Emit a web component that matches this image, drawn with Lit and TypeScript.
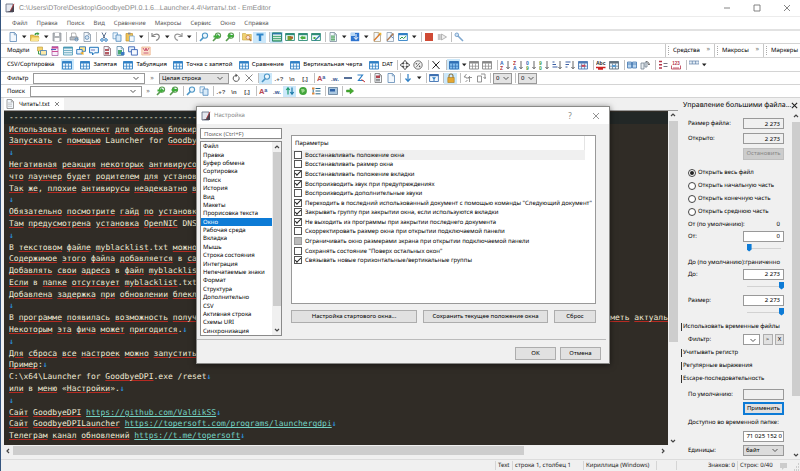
import { LitElement, html, svg, css, nothing } from "lit";
import { customElement, state } from "lit/decorators.js";
import { classMap } from "lit/directives/class-map.js";

const B = "#2f7fc4";
const mag = (c: string, x = 0) => svg`<circle cx=${6 + x} cy="3.6" r="2.6" fill="#eef7fc" stroke=${c} stroke-width="1.1"/><path d="M${4.2 + x} 5.6L${1 + x} 9" stroke=${c} stroke-width="1.6"/>`;
const page = (c: string) => svg`<path d="M2 .5h4.5L8.500 2.500V9.500H2z" fill="#f3f8fd" stroke=${c} stroke-width=".8"/><path d="M6.300 .5v2.300h2.200" fill="none" stroke=${c} stroke-width=".7"/>`;
const grid = (head: string, body = "#e9f4fc") => svg`<path d="M.5 1.500h9v7.500h-9z" fill=${body} stroke=${head} stroke-width=".9"/><path d="M.5 1.500h9v2h-9z" fill=${head}/><path d="M.5 6.200h9M3.500 3.500V9M6.500 3.500V9" stroke=${head} stroke-width=".7"/>`;
const win = (c: string) => svg`<path d="M.6 1.500h8.800v7h-8.800z" fill="#f4faff" stroke=${c} stroke-width=".9"/><path d="M.6 1.200h8.800v2h-8.800z" fill=${c}/>`;
const glyph = (t: string, c: string, s = 7) => svg`<text x="5" y="7.500" text-anchor="middle" font-size=${s} font-weight="700" fill=${c}>${t}</text>`;
const down = svg`<path d="M8 1v7.500M6.400 7L8 8.800L9.600 7" fill="none" stroke="#555" stroke-width=".9"/>`;
const sortPair = (a: string, b: string, ca: string, cb: string) => svg`<text x="0" y="4.700" font-size="5" font-weight="700" fill=${ca}>${a}</text><text x="0" y="9.500" font-size="5" font-weight="700" fill=${cb}>${b}</text>${down}`;

const ICONS: Record<string, unknown> = {
  app: svg`<path d="M1 1h7v8H1z" fill="#e4e7ee" stroke="#5a6478" stroke-width=".8"/><path d="M5 8L9 1v8H1z" fill="#4a4450"/><path d="M5.500 7.500L9 .800" stroke="#b33" stroke-width=".8"/>`,
  page: page("#5d89b5"),
  pageGrey: svg`${page("#888")}<path d="M3 4h4M3 5.700h4M3 7.400h4" stroke="#aaa" stroke-width=".6"/>`,
  open: svg`<path d="M.5 3h3l1 1h4v5h-8z" fill="#e9c34a" stroke="#b4902b" stroke-width=".6"/><path d="M2 5.500h8L8.200 9H.5z" fill="#fbe48f"/><path d="M4.500 3c0-2 1.500-2.600 3-2V0l2 1.800-2 1.800V2.400c-1-.4-1.700 0-1.700.8z" fill="#3a9c3f"/>`,
  save: svg`<path d="M1 1h8v8H1z" fill="#b2b6ba" stroke="#8d9298" stroke-width=".7"/><path d="M3 1h4v3H3zM2.600 6h4.800v3H2.600z" fill="#fff"/>`,
  print: svg`<path d="M2.500 1h4l1 4h-5z" fill="#fff" stroke="#888" stroke-width=".6"/><path d="M1 5h8v3H1z" fill="#b7bdc4" stroke="#808890" stroke-width=".6"/><circle cx="7.500" cy="7.500" r="1.500" fill="none" stroke="#4d86b8" stroke-width=".8"/>`,
  preview: svg`${page("#8795a5")}<circle cx="5" cy="5.500" r="1.900" fill="#d8e7f4" stroke="#5c88b4" stroke-width=".8"/>`,
  cut: svg`<path d="M3 .5l3 6M7 .5L4 6.500" stroke="#5d7290" stroke-width="1"/><circle cx="3" cy="8" r="1.300" fill="none" stroke=${B} stroke-width="1"/><circle cx="7" cy="8" r="1.300" fill="none" stroke=${B} stroke-width="1"/>`,
  copy: svg`<path d="M1 .8h4.500v6H1z" fill="#eaf4fc" stroke="#6c9fc9" stroke-width=".8"/><path d="M4 3h5v6.300H4z" fill="#d9ebf9" stroke="#4b87bb" stroke-width=".8"/>`,
  paste: svg`<path d="M1 1.500h6.500v7.500H1z" fill="#efc35a" stroke="#c1922f" stroke-width=".7"/><path d="M3 .6h2.500v1.800H3z" fill="#888"/><path d="M4.500 4h4.700v5.500H4.500z" fill="#f4f9fd" stroke="#6c9fc9" stroke-width=".7"/>`,
  undo: svg`<path d="M1 1v3.500h3.500M1.200 4.300C3 1.500 8 1 8.300 4.500 8.400 6.500 7 7.600 5 8.500" fill="none" stroke="#888" stroke-width="1.200"/>`,
  redo: svg`<path d="M9 1v3.500H5.500M8.800 4.300C7 1.500 2 1 1.700 4.500 1.600 6.500 3 7.600 5 8.500" fill="none" stroke="#999" stroke-width="1.200"/>`,
  find: mag("#4e97c7"),
  findNext: svg`${mag("#5a9a50")}<path d="M1.500 3.500h3.200V1.800L8.200 4.500 4.700 7V5.500H1.500z" fill="#3fae3a"/>`,
  findPrev: svg`${mag("#5a9a50")}<path d="M8.500 3H5.500V1.300L2 4l3.500 2.600V5h3z" fill="#3fae3a"/>`,
  findFiles: svg`<path d="M.5 1.500h3l1 1h4.800v5.500H.5z" fill="#f1d173" stroke="#c5a23c" stroke-width=".6"/><circle cx="6" cy="5.400" r="2" fill="#fbe4e0" stroke="#c98b50" stroke-width=".9"/><path d="M7.400 7L9.300 9" stroke="#b06e38" stroke-width="1.200"/>`,
  filter: svg`<path d="M1.500 1.500h7v2H6.200V9H3.800V3.500H1.500z" fill="#2f86c9"/>`,
  lines: svg`<path d="M.5 .8h9v8.400h-9z" fill="#fff" stroke="#1e7d66" stroke-width=".9"/><path d="M.5 1h9v1.500h-9z" fill="#2878a8"/><path d="M1 4.300h8M1 6.300h8M1 8.200h8" stroke="#2d9a5e" stroke-width="1"/>`,
  winRed: svg`${win("#2f8c77")}<path d="M2.500 4h3.500l2 2.500-2 1.800H2.500z" fill="#7a9a2e"/><path d="M5 4.500h3v2H5z" fill="#b8602c"/>`,
  winArrow: svg`${win("#2f8c77")}<path d="M7.500 4.500h-3V3.400L2 5.700 4.500 8V6.900h3z" fill="#4bae3f"/>`,
  winPen: svg`${win("#2f8c77")}<path d="M3 8.500L8.500 3l1 1L4 9z" fill="#2a78a8"/><path d="M2.500 5h2v2h-2z" fill="#4bae3f"/>`,
  docGreen: svg`${page("#7b8f9c")}<path d="M3 3.500h4v5H3z" fill="#57a86b"/><path d="M3 5h4M3 6.700h4" stroke="#fff" stroke-width=".5"/>`,
  blueDown: svg`<path d="M.8 .8h8.400v8.400H.8z" fill="#2e74cf"/><path d="M1 1h4v3H1z" fill="#b8d8f5"/><path d="M6 2v5M4 5.200L6 7.500l2-2.300" fill="none" stroke="#fff" stroke-width="1"/>`,
  wand: svg`${page("#b0a080")}<path d="M2 8.500L8 2" stroke="#d97a2a" stroke-width="1.300"/><path d="M6.500 .8h2.800v2.800z" fill="#efb52c"/>`,
  wand2: svg`${page("#8fa0b0")}<path d="M2 8.500L8.500 1.500" stroke="#b07a50" stroke-width="1.300"/><path d="M5 3.500l3.500 2.800" stroke="#5b7fb5" stroke-width=".9"/>`,
  chart: svg`${win(B)}<path d="M2 7l2-2 1.500 1.500L8.300 4" fill="none" stroke="#3a9d4b" stroke-width="1"/>`,
  stop: svg`<path d="M1 1h8v8H1z" fill="#cf4a35"/>`,
  play: svg`<path d="M.8 2h3v6h-3z" fill="#c5c5c5"/><path d="M4.500 2L9.500 5 4.500 8z" fill="#eee" stroke="#999" stroke-width=".7"/>`,
  wrench: svg`<path d="M3 3l6 6" stroke="#7ea7cf" stroke-width="1.600"/><circle cx="2.800" cy="2.800" r="1.800" fill="#cfe1f2" stroke="#6f9bc7" stroke-width=".9"/>`,
  mod1: svg`<path d="M.5 1h5v4h-5z" fill="#f3d36e" stroke="#b99531" stroke-width=".6"/><path d="M3.500 4.500h6v4.500h-6z" fill="#fbe9a8" stroke="#3c79b4" stroke-width=".8"/><path d="M1.500 5v3h2" fill="none" stroke="#3f9a4c"/>`,
  mod2: svg`<path d="M2 .5h6v9H2z" fill="#f7eefa" stroke="#a04a9a" stroke-width=".7"/><path d="M2 1h6v1.500H2zM2 5h6v1H2z" fill="#cc4b93"/><path d="M1 3.500h5" stroke="#4c63c0" stroke-width="1"/>`,
  mod3: svg`<path d="M.5 1h9v8h-9z" fill="#e2f1f7" stroke="#4a98b4" stroke-width=".8"/><path d="M.5 1h9v1.500h-9z" fill="#4a98b4"/><path d="M1 4.500h8M1 6.700h8" stroke="#5c9fb8" stroke-width=".8"/>`,
  mod4: svg`<path d="M3.500 .8h6v4.500h-6z" fill="#ffe489" stroke="#2c77bd" stroke-width=".9"/><path d="M.7 3.500h5.500v4.500H.7z" fill="#e7f3fc" stroke="#2c77bd" stroke-width=".9"/><path d="M4 7l3.500-1.500v3.500z" fill="#efae28"/>`,
  mod5: svg`<path d="M.6 1.300h8.800v5.500H5.500L3.500 9V6.800H.6z" fill="#eff8ff" stroke="#2276bb" stroke-width="1"/><path d="M2 4h4" stroke="#55a" stroke-width=".8"/>`,
  mod6: svg`${page("#8b6f78")}<path d="M3 3h4v2H3zM3 6h4v2.500H3z" fill="#b55a62"/>`,
  mod7: svg`${page("#5c8ba8")}<path d="M3 4h4v4.500H3z" fill="#4aa874"/><path d="M6 6h3.500v3H6z" fill="#3c79c2"/>`,
  mod8: svg`<path d="M.6 .8h6v5h-6z" fill="#e7f3fc" stroke="#3a63b5" stroke-width=".9"/><path d="M3.400 3.600h6v5.500h-6z" fill="#f6faff" stroke="#3a63b5" stroke-width=".9"/>`,
  mod9: svg`<path d="M.8 1h8.400v8H.8z" fill="#fbe2cf" stroke="#e7a06c" stroke-width=".6"/><path d="M2 2l2 3 1-3 1 3 2-3M2.500 7h5" fill="none" stroke="#c64c6b" stroke-width=".9"/>`,
  grid: grid(B),
  gridGrey: grid("#888", "#fff"),
  gridFill: grid("#2f6fb5", "#83bdec"),
  gridRed: svg`${grid("#4c79b5")}<path d="M3.500 4.800h4v2h-4z" fill="#c8485a"/>`,
  gridDark: svg`${grid("#62707c")}<path d="M3 5h4v2H3z" fill="#5b9bd0"/>`,
  move: svg`<path d="M5 .3L7 2.800H6.200V4h1.200v-.9L9.800 5 7.400 7V6H6.200v1.300H7L5 9.700 3 7.300h.8V6H2.600v1L.2 5l2.400-2v1h1.200V2.800H3z" fill="#fff" stroke="#222" stroke-width=".8"/>`,
  percent: svg`<circle cx="5" cy="5" r="4.200" fill="#f2f2f2" stroke="#555" stroke-width=".8"/><path d="M3 7.300l4-4.600" stroke="#555" stroke-width=".8"/><circle cx="3.400" cy="3.700" r=".8" fill="#555"/><circle cx="6.600" cy="6.400" r=".8" fill="#555"/>`,
  cross: svg`<path d="M1.500 1.500l7 7M8.500 1.500l-7 7" stroke="#777" stroke-width=".9"/>`,
  crossDark: svg`<path d="M1.500 1l7 8M8.500 1.500l-7 7" stroke="#222" stroke-width="1"/>`,
  az: sortPair("A", "Z", "#2b62b0", "#b03030"),
  za: sortPair("Z", "A", "#b03030", "#2b62b0"),
  n1: sortPair("0", "9", "#2b62b0", "#3d9a3d"),
  n2: sortPair("9", "0", "#3d9a3d", "#3d9a3d"),
  s1: svg`<path d="M.5 2h2M.5 4.500h3.500M.5 7h5" stroke="#3b5fa5" stroke-width="1.200"/>${down}`,
  s2: svg`<path d="M.5 2h5M.5 4.500h3.500M.5 7h2" stroke="#3b5fa5" stroke-width="1.200"/>${down}`,
  abc: svg`<text x="0" y="5" font-size="5" font-weight="700" fill="#222">Abc</text><path d="M0 7.500h9.500M2 9h5" stroke="#c22" stroke-width="1.300"/>`,
  join: svg`<path d="M.5 2h4v6h-4zM5.500 2h4v6h-4z" fill="#b9d6f0" stroke="#4377b0" stroke-width=".8"/><path d="M.5 4h9" stroke="#4377b0" stroke-width=".8"/>`,
  split: svg`<path d="M1 3h3v6H1zM5 2h2v5H5z" fill="#e8edf0" stroke="#718090" stroke-width=".8"/><path d="M6 1.500c2 0 3 1 3 3M7.800 3.500L9 5l1-1.500" fill="none" stroke="#555" stroke-width=".8"/>`,
  rows: svg`<path d="M1 1.500h3M1 4.700h3M1 8h3" stroke="#b5354a" stroke-width="1.600"/><path d="M5.500 3.500h4M5.500 6.500h4" stroke="#667" stroke-width=".9"/>`,
  ruler: svg`<text x="5" y="4.500" text-anchor="middle" font-size="4.500" font-weight="700" fill="#b5354a">123</text><path d="M.5 5.500V9h9V5.500M3 7v2M5 7v2M7 7v2" fill="none" stroke="#b5354a" stroke-width=".8"/>`,
  header: svg`<path d="M0 1h10v3H0z" fill="#e5eef6" stroke="#5f7fa8" stroke-width=".7"/><path d="M3.300 1v3M6.600 1v3" stroke="#5f7fa8" stroke-width=".7"/>`,
  refresh: svg`<path d="M7.500 3.500A3 3 0 1 1 4.800 2.400" fill="none" stroke="#555" stroke-width="1"/><path d="M4.500 .6L7 2.400 4.500 4.200z" fill="#555"/>`,
  regex: glyph(".+?", "#555", 6),
  nl: glyph("\\n", "#555", 6),
  brackets: glyph("[,]", "#444", 6),
  aa: svg`<text x="0" y="8" font-size="7.500" font-weight="700" fill="#b8474f">A</text><text x="5.300" y="5.800" font-size="5.500" font-weight="700" fill="#3d5e9c">a</text>`,
  word: glyph(".w.", "#33558f", 6),
  dash: svg`<path d="M1 5h8" stroke="#2d4d80" stroke-width="1.600"/>`,
  zed: svg`<path d="M1.500 2h5L2.500 7.500h5" fill="none" stroke=${B} stroke-width="1.200"/><path d="M5.500 6.500l3.500 2.500" stroke="#c33" stroke-width="1"/>`,
  bookRed: svg`${page("#777")}<path d="M3 2.500h4V5H3z" fill="#b2434e"/><path d="M3 6.300h4M3 7.800h4" stroke="#555" stroke-width=".8"/>`,
  arrowDown: svg`<path d="M5 1v7M2.500 5.500L5 8.300l2.500-2.800" fill="none" stroke=${B} stroke-width="1.200"/>`,
  winFilter: svg`${win("#3d6fb0")}<path d="M3 4.300h4L5.500 6.200V8h-1V6.200z" fill=${B}/>`,
  lock: svg`<path d="M3 5V3a2 2 0 0 1 4 0v2" fill="none" stroke="#8d7740" stroke-width="1.100"/><path d="M1.800 4.500h6.400v5H1.800z" fill="#e5a833" stroke="#a87920" stroke-width=".6"/>`,
  fold: svg`<path d="M3.500 1L1 4h2v1h3V4M5 4.500h4M6.500 3v6M4.500 7l-2 2" fill="none" stroke="#888" stroke-width=".9"/>`,
  unfold: svg`<path d="M1.500 3h4v6h-4zM5 1h4v4.500M7.500 4L9 5.700l1-1.700" fill="none" stroke="#888" stroke-width=".9"/>`,
  updown: svg`<path d="M3 8.500V2M1.300 4L3 1.800 4.700 4" fill="none" stroke="#1f9c70" stroke-width="1.200"/><path d="M7 1.500V8M5.300 6L7 8.200 8.700 6" fill="none" stroke="#1f7dac" stroke-width="1.200"/>`,
  globe: svg`<circle cx="5" cy="5" r="3.900" fill="#42a53b"/><path d="M3 3h3l1 2-3 2z" fill="#9bd68c"/>`,
  tree: svg`<path d="M1 1.500h2.500v2H1zM1 6.500h2.500v2H1z" fill="#e08a3c"/><path d="M2.200 3.500v3M4.500 2.500h5M4.500 5h5M4.500 7.800h5" stroke="#2b6a8a" stroke-width="1"/>`,
  screen: svg`<path d="M.5 1.500h9v7h-9z" fill="#aac7e0" stroke="#5e7b96" stroke-width=".8"/><path d="M2 3h5v2.500H2z" fill="#2f63a8"/>`,
  goRight: svg`<path d="M1.500 4h3.500V2L8.700 5 5 8V6H1.500z" fill="#45ab2e" stroke="#2e8a20" stroke-width=".5"/>`,
};

const icon = (name: string) => html`<svg class="ico" viewBox="0 0 10 10" aria-hidden="true">${ICONS[name]}</svg>`;
const chevron = html`<svg class="chev" viewBox="0 0 8 8" aria-hidden="true"><path d="M1.500 3L4 5.500L6.500 3" fill="none" stroke="#555" stroke-width="1"/></svg>`;
const arrow = (dir: string) => html`<svg class="arrow ${dir}" viewBox="0 0 8 8" aria-hidden="true"><path d="M2 5L4 3L6 5" fill="none" stroke="#444" stroke-width="1.200"/></svg>`;

/** "|" is a separator, "v" a drop-down mark, a leading "*" marks a pressed button. */
const tools = (list: string) =>
  list.split(" ").map((n) => {
    if (n === "|") return html`<span class="sep"></span>`;
    if (n === "v") return html`<button class="dd" aria-label="Ещё"><svg viewBox="0 0 6 4"><path d="M1 .5h4.500L3.200 3.300z" fill="#222"/></svg></button>`;
    const on = n.startsWith("*");
    const key = on ? n.slice(1) : n;
    return html`<button class=${classMap({ tool: true, on })} aria-label=${key}>${icon(key)}</button>`;
  });

const LINES = [
  "-".repeat(60),
  "Использовать комплект для обхода блокировок",
  "Запускать с помощью Launcher for GoodbyeDPI",
  "↓",
  "Негативная реакция некоторых антивирусов",
  "что лаунчер будет родителем для установки",
  "Так же, плохие антивирусы неадекватно во",
  "↓",
  "Обязательно посмотрите гайд по установке",
  "Там предусмотрена установка OpenNIC DNS",
  "↓",
  "В текстовом файле myblacklist.txt можно",
  "Содержимое этого файла добавляется в сам",
  "Добавлять свои адреса в файл myblacklist",
  "Если в папке отсутсвует myblacklist.txt,",
  "Добавлена задержка при обновлении блекли",
  "↓",
  "В программе появилась возможность получи\tиметь актуаль",
  "Некоторым эта фича может пригодится.↓",
  "↓",
  "Для сброса все настроек можно запустить",
  "Пример:↓",
  "C:\\x64\\Launcher for GoodbyeDPI.exe /reset↓",
  "или в меню «Настройки».↓",
  "↓",
  "Сайт GoodbyeDPI https://github.com/ValdikSS↓",
  "Сайт GoodbyeDPILauncher https://topersoft.com/programs/launchergdpi↓",
  "Телеграм канал обновлений https://t.me/topersoft↓",
];

const TOKEN = /(https?:\/\/[^\s↓]+|GoodbyeDPI(?:Launcher)?|myblacklist|OpenNIC|[А-Яа-яё]{2,}|↓)/;
const rich = (text: string) =>
  text.split(TOKEN).map((t, i) => {
    if (i % 2 === 0) return t;
    if (t === "↓") return html`<span class="eol">↓</span>`;
    if (t.startsWith("http")) return html`<a class="url" href=${t}>${t}</a>`;
    return html`<span class="typo">${t}</span>`;
  });

const SECTIONS = ["Файл", "Правка", "Буфер обмена", "Сортировка", "Поиск", "История", "Вид", "Макеты", "Прорисовка текста", "Окно", "Рабочая среда", "Вкладка", "Мышь", "Строка состояния", "Интеграция", "Непечатаемые знаки", "Формат", "Структура", "Дополнительно", "CSV", "Активная строка", "Схемы URI", "Синхронизация"];

const OPTIONS: [string, boolean, boolean?][] = [
  ["Восстанавливать положение окна", false],
  ["Восстанавливать размер окна", false],
  ["Восстанавливать положение вкладки", true],
  ["Воспроизводить звук при предупреждениях", true],
  ["Воспроизводить дополнительные звуки", false],
  ['Переходить в последний использованный документ с помощью команды "Следующий документ"', true],
  ["Закрывать группу при закрытии окна, если используются вкладки", true],
  ["Не выходить из программы при закрытии последнего документа", true],
  ["Скорректировать размер окна при открытии подключаемой панели", false],
  ["Ограничивать окно размерами экрана при открытии подключаемой панели", false, true],
  ['Сохранять состояние "Поверх остальных окон"', false],
  ["Связывать новые горизонтальные/вертикальные группы", true],
];

const base = css`
  * { box-sizing: border-box; }
  button, input, select { font: inherit; color: inherit; margin: 0; padding: 0; border: 0; border-radius: 0; background: none; min-width: 0; outline: none; }
  .ico { width: 10px; height: 10px; display: block; font-family: "Liberation Sans", sans-serif; flex: none; }
  .chev { width: 8px; height: 8px; display: block; }
  .arrow { width: 8px; height: 8px; display: block; flex: none; }
  .arrow.down { transform: rotate(180deg); }
  .arrow.left { transform: rotate(-90deg); }
  .arrow.right { transform: rotate(90deg); }
  .combo { display: grid; grid-template-columns: 1fr 12px; align-items: center; }
  .combo > select, .combo > input { grid-area: 1 / 1 / 2 / 3; appearance: none; width: 100%; height: 100%; padding-left: 2px; }
  .combo > .chev { grid-area: 1 / 2; pointer-events: none; }
`;

@customElement("settings-dialog")
export class SettingsDialog extends LitElement {
  @state() private current = 9;

  static styles = [base, css`
    :host { display: flex; flex-direction: column; background: #f0f0f0; border: 1px solid #8a8a88; box-shadow: 0 1px 6px rgba(0, 0, 0, .5); font: 6px/9px "Noto Sans", sans-serif; color: #000; }
    .title { display: flex; align-items: center; height: 17px; padding: 0 7px 0 4px; background: #fff; color: #888; }
    .title .name { flex: 1; padding-left: 3px; }
    .title button { width: 12px; margin-left: 14px; font-size: 8px; }
    .title .x { display: block; width: 8px; height: 8px; margin: auto; }
    .cols { display: grid; grid-template-columns: 82px minmax(0, 1fr); column-gap: 9px; padding: 4px 10px 3px 3px; flex: 1; min-height: 0; border-bottom: 1px solid #bbb; margin-right: 3px; }
    .left { display: flex; flex-direction: column; gap: 2px; min-height: 0; }
    .find { height: 11px; border: 1px solid #8a8a8a; background: #fff; padding: 0 3px; }
    .find::placeholder { color: #666; }
    .listbox { display: flex; flex: 1; min-height: 0; border: 1px solid #8a8a8a; background: #fff; }
    .listbox ul { flex: 1; min-width: 0; margin: 0; padding: 0; list-style: none; display: grid; grid-auto-rows: 1fr; }
    .listbox li { display: flex; align-items: center; min-height: 0; line-height: 8px; white-space: nowrap; padding-left: 2px; }
    .listbox li.sel { background: #0d7bd6; color: #fff; }
    .bar { width: 9px; background: #f0f0f0; display: flex; flex-direction: column; align-items: center; justify-content: space-between; }
    .thumb { width: 8px; height: 154px; background: #cdcdcd; margin-bottom: auto; }
    .bar .arrow { margin: 1px 0; }
    .right { display: flex; flex-direction: column; padding-top: 7px; min-width: 0; }
    .box { height: 169px; border: 1px solid #999; background: #fff; padding-right: 10px; }
    .box .head { height: 14px; padding: 3px 3px 0; border-right: 1px solid #e4e4e4; }
    .opts { display: grid; grid-template-columns: minmax(0, 1fr); grid-auto-rows: 1fr; height: 115px; }
    .opts label { display: flex; align-items: center; gap: 3px; padding-left: 2px; min-height: 0; line-height: 8px; white-space: nowrap; }
    .opts label.hot { background: #f0f0f0; }
    .opts input { appearance: none; width: 8px; height: 8px; border: 1px solid #555; background: #fff; display: grid; place-items: center; flex: none; }
    .opts input:checked::before { content: ""; width: 5px; height: 2px; border-left: 1px solid #222; border-bottom: 1px solid #222; transform: translateY(-1px) rotate(-45deg); }
    .opts input.mixed { background: #bbb; border-color: #999; }
    .push { height: 13px; border: 1px solid #adadad; background: #e1e1e1; }
    .actions { display: grid; grid-template-columns: 126px 125px 42px; gap: 6px; margin-top: 6px; }
    .foot { display: flex; justify-content: flex-end; gap: 4px; padding: 7px 8px 3px; }
    .foot .push { width: 41px; }
  `];

  render() {
    return html`
      <div class="title">
        ${icon("app")}<span class="name">Настройка</span>
        <button>?</button>
        <button aria-label="Закрыть"><svg class="x" viewBox="0 0 8 8"><path d="M1 1l6 6M7 1L1 7" stroke="#888" stroke-width=".9"/></svg></button>
      </div>
      <div class="cols">
        <div class="left">
          <input class="find" placeholder="Поиск (Ctrl+F)" aria-label="Поиск" />
          <div class="listbox">
            <ul role="listbox" aria-label="Разделы">
              ${SECTIONS.map((s, i) => html`<li role="option" class=${classMap({ sel: i === this.current })} aria-selected=${i === this.current} @click=${() => (this.current = i)}>${s}</li>`)}
            </ul>
            <div class="bar">${arrow("up")}<div class="thumb"></div>${arrow("down")}</div>
          </div>
        </div>
        <div class="right">
          <div class="box">
            <div class="head">Параметры</div>
            <div class="opts">
              ${OPTIONS.map(([t, on, mixed], i) => html`<label class=${i === 0 ? "hot" : ""}><input type="checkbox" class=${mixed ? "mixed" : ""} .checked=${on} /><span>${t}</span></label>`)}
            </div>
          </div>
          <div class="actions">
            <button class="push">Настройка стартового окна...</button>
            <button class="push">Сохранить текущее положение окна</button>
            <button class="push">Сброс</button>
          </div>
        </div>
      </div>
      <div class="foot"><button class="push">OK</button><button class="push">Отмена</button></div>
    `;
  }
}

@customElement("file-panel")
export class FilePanel extends LitElement {
  static styles = [base, css`
    :host { display: flex; flex-direction: column; background: #f0f0f0; font: 6px/9px "Noto Sans", sans-serif; color: #000; }
    .cap { display: flex; align-items: center; justify-content: space-between; height: 14px; padding: 1px 4px 0 5px; white-space: nowrap; font-size: 7px; }
    .cap svg { width: 7px; height: 7px; display: block; }
    .wrap { display: flex; flex: 1; min-height: 0; }
    .form { flex: 1; min-width: 0; padding: 4px 7px 0 3px; }
    .row { display: grid; grid-template-columns: minmax(0, 1fr) 41px; align-items: center; padding-left: 7px; height: 12px; white-space: nowrap; }
    .radio, .tick { display: flex; align-items: center; height: 13px; gap: 2px; white-space: nowrap; }
    .tick { gap: 1px; }
    .tall .row { height: 15px; }
    .mid .row { height: 13px; }
    .last .row { height: 14px; }
    .radios { padding: 5px 0 0 7px; }
    .gap { padding-top: 2px; }
    .end { text-align: right; padding-right: 4px; }
    .wide { grid-template-columns: minmax(0, 1fr) auto; }
    input.num { height: 11px; border: 1px solid #999; background: #fff; text-align: right; padding-right: 3px; width: 100%; }
    input.num[readonly] { background: #f0f0f0; }
    input.num.tight { padding-right: 1px; background: #fff; }
    .push { height: 12px; border: 1px solid #adadad; background: #e1e1e1; }
    .push:disabled { background: #ccc; border-color: #bfbfbf; color: #888; }
    .push.main { border: 2px solid #0d7bd6; height: 13px; }
    .radio input { appearance: none; width: 8px; height: 8px; border: 1px solid #444; border-radius: 50%; background: #fff; display: grid; place-items: center; flex: none; }
    .radio input:checked::before { content: ""; width: 4px; height: 4px; border-radius: 50%; background: #222; }
    .range { appearance: none; width: 100%; height: 10px; grid-column: 2; }
    .range::-webkit-slider-runnable-track { height: 9px; background: linear-gradient(#d2d2d2, #d2d2d2) center / 34px 1px no-repeat; }
    .range::-webkit-slider-thumb { appearance: none; width: 5px; height: 8px; background: #0d7bd6; clip-path: polygon(0 0, 100% 0, 100% 75%, 50% 100%, 0 75%); }
    .tick input { appearance: none; width: 1px; height: 8px; background: #333; flex: none; }
    .trio { display: grid; grid-template-columns: 17px 10px 9px; justify-content: space-between; }
    .combo { border: 1px solid #999; background: #fff; height: 11px; }
    .combo.grey { background: #dcdcdc; }
    .trio .combo { grid-template-columns: 1fr 10px; }
    .trio .push { height: 11px; }
    .bar { width: 9px; display: flex; flex-direction: column; align-items: center; justify-content: space-between; }
    .thumb { width: 8px; flex: 1; margin: 2px 0 55px; background: #cdcdcd; }
  `];

  private slider(label: string, at: number) {
    return html`<div class="row"><input class="range" type="range" min="0" max="100" .value=${String(at)} aria-label=${label} /></div>`;
  }

  render() {
    const radios = ["Открыть весь файл", "Открыть начальную часть", "Открыть конечную часть", "Открыть среднюю часть"];
    return html`
      <div class="cap"><span>Управление большими файла...</span><button aria-label="Закрыть"><svg viewBox="0 0 8 8"><path d="M1 1l6 6M7 1L1 7" stroke="#222" stroke-width="1.300"/></svg></button></div>
      <div class="wrap">
        <div class="form">
          <div class="tall">
            <div class="row"><label for="size">Размер файла:</label><input id="size" class="num" readonly value="2 273" /></div>
            <div class="row"><label for="opened">Открыто:</label><input id="opened" class="num" readonly value="2 273" /></div>
            <div class="row"><span></span><button class="push" disabled>Остановить</button></div>
          </div>
          <div class="radios">${radios.map((r, i) => html`<label class="radio"><input type="radio" name="mode" .checked=${i === 0} />${r}</label>`)}</div>
          <div>
            <div class="row wide"><span>От (по умолчанию):</span><span class="end">0</span></div>
            <div class="row"><label for="from">От:</label><input id="from" class="num" value="0" /></div>
            ${this.slider("От", 10)}
          </div>
          <div class="gap">
            <div class="row wide"><span>До (по умолчанию):</span><span class="end">граниченно</span></div>
            <div class="row"><label for="to">До:</label><input id="to" class="num" value="2 273" /></div>
            ${this.slider("До", 100)}
          </div>
          <div class="gap">
            <div class="row"><label for="len">Размер:</label><input id="len" class="num" value="2 273" /></div>
            ${this.slider("Размер", 100)}
          </div>
          <div class="mid gap">
            <label class="tick"><input type="checkbox" />Использовать временные файлы</label>
            <div class="row"><label for="flt">Фильтр:</label><span class="trio"><span class="combo"><select id="flt"><option></option></select>${chevron}</span><button class="push">&gt;</button><button class="push">X</button></span></div>
            <label class="tick"><input type="checkbox" />Учитывать регистр</label>
            <label class="tick"><input type="checkbox" />Регулярные выражения</label>
            <label class="tick"><input type="checkbox" />Escape-последовательность</label>
          </div>
          <div class="last gap">
            <div class="row"><label for="def">По умолчанию:</label><input id="def" class="num" readonly /></div>
            <div class="row"><span></span><button class="push main">Применить</button></div>
            <div class="row wide"><span>Доступно во временной папке:</span></div>
            <div class="row"><span></span><input class="num tight" readonly value="71 025 152 0" aria-label="Доступно во временной папке" /></div>
            <div class="row"><label for="unit">Единицы:</label><span class="combo grey"><select id="unit"><option>байт</option></select>${chevron}</span></div>
          </div>
        </div>
        <div class="bar">${arrow("up")}<div class="thumb"></div>${arrow("down")}</div>
      </div>
    `;
  }
}

@customElement("app-root")
export class AppRoot extends LitElement {
  static styles = [base, css`
    :host { display: flex; flex-direction: column; position: relative; height: 100vh; min-height: 471px; overflow: hidden; background: #fff; border-left: 1px solid #35557f; font: 6px/9px "Noto Sans", sans-serif; color: #000; text-rendering: geometricPrecision; white-space: nowrap; }
    .title { display: flex; align-items: center; gap: 4px; height: 17px; padding-left: 4px; color: #8a8a8a; border-bottom: 1px solid #ececec; font: 7px/9px "Liberation Sans", sans-serif; }
    .title .name { flex: 1; }
    .title .ctl { width: 26px; display: grid; place-items: center; }
    .title .ctl svg { width: 8px; height: 8px; }
    .menu { display: flex; align-items: center; gap: 9px; height: 14px; padding-left: 11px; border-bottom: 2px solid #e2e2e2; color: #555; }
    .menu a { color: inherit; text-decoration: none; }
    .strip { display: flex; align-items: center; height: 13px; border-bottom: 1px solid #d4d4d4; padding-left: 6px; overflow: hidden; }
    .strip.main { padding-left: 5px; }
    .tool { width: 13px; height: 11px; display: grid; place-items: center; flex: none; }
    .tool.on { background: #cce8fa; }
    .dd { width: 9px; height: 11px; display: grid; place-items: center; flex: none; }
    .dd svg { width: 6px; height: 4px; }
    .sep { width: 4px; height: 10px; border-right: 1px solid #c0c0c0; flex: none; }
    .mods { height: 14px; }
    .mods .lab { width: 28px; }
    .docks { margin-left: auto; display: flex; height: 100%; }
    .dock { width: 49px; display: flex; align-items: center; justify-content: space-between; border-left: 1px solid #c8c8c8; padding-right: 4px; }
    .dock::before { content: ""; width: 1px; height: 9px; margin: 0 3px 0 2px; border-left: 1px dotted #aaa; }
    .dock span { flex: 1; }
    .dock:last-child { width: 37px; padding-right: 0; }
    .dock small { font-size: 7px; line-height: 11px; align-self: flex-start; color: #777; }
    .csv { height: 14px; }
    .csv .named { display: flex; align-items: center; justify-content: space-between; width: 386px; }
    .csv .named button { display: flex; align-items: center; gap: 3px; }
    .csv .named .tool { display: grid; }
    .csv .sep { width: 5px; }
    .csv .dd { width: 7px; }
    .field { height: 11px; border: 1px solid #999; background: #fff; }
    .field.long { width: 112px; }
    .field.mode { width: 70px; background: #e3e3e3; }
    .field.tiny { width: 19px; background: #e3e3e3; margin-left: 2px; }
    .field.tiny.combo { grid-template-columns: 1fr 9px; }
    .lab { flex: none; }
    .filter .lab { width: 26px; }
    .search .lab { width: 23px; }
    .more { width: 14px; text-align: center; color: #777; flex: none; font-size: 7px; }
    .search .more { width: 12px; }
    .work { display: grid; grid-template-columns: minmax(0, 1fr) 122px; flex: 1; min-height: 0; background: #f0f0f0; }
    .doc { display: grid; grid-template-rows: 13px minmax(0, 1fr) 11px; grid-template-columns: minmax(0, 1fr) 10px; padding-left: 3px; min-width: 0; min-height: 0; padding-bottom: 3px; }
    .tabs { grid-column: 1 / 3; display: flex; border-bottom: 1px solid #9a9a9a; }
    .tab { display: flex; align-items: center; gap: 4px; background: #fff; padding: 0 4px 0 1px; }
    .tab svg.x { width: 6px; height: 6px; display: block; }
    .code { background: #302c26; color: #efe9d4; overflow: hidden; display: flex; min-height: 0; font: 8px/10px "DejaVu Sans Mono", monospace; white-space: pre; }
    .lines { flex: 1; min-width: 0; display: grid; grid-template-columns: minmax(0, 1fr); grid-auto-rows: 1fr; padding: 1px 0 3px; }
    .line { display: flex; align-items: center; justify-content: space-between; min-height: 0; padding-left: 5px; }
    .line:first-child { background: #222726; }
    .typo { text-decoration: underline 1px #b52a22; text-underline-offset: 1px; }
    .url { color: #74d3c4; text-decoration: underline 1px; text-underline-offset: 1px; }
    .eol { color: #2b8fdc; font-weight: 700; }
    .vbar { background: #f0f0f0; display: flex; flex-direction: column; align-items: center; justify-content: space-between; }
    .vbar .thumb { width: 9px; height: 221px; margin-bottom: auto; margin-top: 2px; background: #cdcdcd; }
    .hbar { grid-column: 1 / 3; display: grid; grid-template-columns: 9px 510fr 135fr 9px 10px; align-items: center; background: #f0f0f0; }
    .hbar .thumb { height: 9px; background: #cdcdcd; }
    .hbar .arrow.right { grid-column: 4; }
    .status { display: flex; justify-content: flex-end; align-items: center; height: 12px; background: #f0f0f0; border-top: 1px solid #dcdcdc; color: #222; }
    .status span { border-left: 1px solid #d5d5d5; padding-left: 2px; height: 9px; }
    .s1 { width: 17px; }
    .s2 { width: 71px; }
    .s3 { width: 73px; }
    .s0 { width: 20px; }
    .status .s4 { width: 61px; text-align: right; padding-right: 2px; }
    .s5 { width: 39px; }
    .status .ico { margin-left: 2px; }
    settings-dialog { position: absolute; left: 195px; top: 106px; width: 414px; height: 258px; }
  `];

  render() {
    const csv = ["Запятая", "Табуляция", "Точка с запятой", "Сравнение", "Вертикальная черта", "DAT"];
    return html`
      <header class="title">
        ${icon("app")}<span class="name">C:\\Users\\DTore\\Desktop\\GoodbyeDPI.0.1.6...Launcher.4.4\\Читать!.txt - EmEditor</span>
        ${["M1 4h6", "M1 1h6v6H1z", "M1 1l6 6M7 1L1 7"].map((d) => html`<button class="ctl" aria-label="Окно"><svg viewBox="0 0 8 8"><path d=${d} fill="none" stroke="#777" stroke-width=".9"/></svg></button>`)}
      </header>
      <nav class="menu">${["Файл", "Правка", "Поиск", "Вид", "Сравнение", "Макросы", "Сервис", "Окно", "Справка"].map((m) => html`<a href="#">${m}</a>`)}</nav>
      <div class="strip main">${tools("page v open v save | print preview | cut copy paste v | undo v redo v | find findNext findPrev | findFiles *filter | *lines winRed winArrow winPen | docGreen v blueDown v wand wand2 chart v | stop play | wrench")}</div>
      <div class="strip mods"><span class="lab">Модули</span>${tools("mod1 mod2 mod3 mod4 mod5 mod6 mod7 mod8 mod9")}
        <div class="docks">
          <div class="dock"><span>Средства</span><small>»</small></div><div class="dock"><span>Макросы</span><small>»</small></div><div class="dock"><span>Маркеры</span></div>
        </div>
      </div>
      <div class="strip csv">
        <div class="named"><span>CSV/Сортировка</span>${tools("*grid")}${csv.map((c) => html`<button>${icon("grid")}${c}</button>`)}</div>
        ${tools("| move percent | crossDark | *gridFill v gridGrey gridGrey | az za n1 n2 s1 s2 gridRed | abc gridDark | join split | rows ruler | header v")}
      </div>
      <div class="strip filter">
        <label class="lab" for="f">Фильтр</label><span class="combo field long"><input id="f" />${chevron}</span><span class="more">»</span>
        <span class="combo field mode"><select aria-label="Режим"><option>Целая строка</option></select>${chevron}</span>
        ${tools("refresh cross | *find regex nl brackets | aa word dash zed | bookRed page | arrowDown v | winFilter | *lock | fold unfold |")}
        ${[0, 0].map((n, i) => html`${i ? tools("|") : nothing}<span class="combo field tiny"><select aria-label="Уровень"><option>${n}</option></select>${chevron}</span>`)}
      </div>
      <div class="strip search">
        <label class="lab" for="s">Поиск</label><span class="combo field long"><input id="s" />${chevron}</span><span class="more">»</span>
        ${tools("findNext findPrev | find copy | regex nl brackets | aa word *updown globe tree | screen | goRight")}
      </div>
      <main class="work">
        <section class="doc">
          <div class="tabs"><div class="tab">${icon("pageGrey")}<span>Читать!.txt</span><button aria-label="Закрыть"><svg class="x" viewBox="0 0 6 6"><path d="M1 1l4 4M5 1L1 5" stroke="#777" stroke-width=".9"/></svg></button></div></div>
          <div class="code"><div class="lines">${LINES.map((l) => { const [a, b] = l.split("\t"); return html`<div class="line"><span>${rich(a)}</span>${b ? html`<span>${rich(b)}</span>` : nothing}</div>`; })}</div></div>
          <div class="vbar">${arrow("up")}<div class="thumb"></div>${arrow("down")}</div>
          <div class="hbar">${arrow("left")}<div class="thumb"></div>${arrow("right")}</div>
        </section>
        <file-panel></file-panel>
      </main>
      <footer class="status">
        <span class="s1">Text</span><span class="s2">строка 1, столбец 1</span><span class="s3">Кириллица (Windows)</span><span class="s0"></span><span class="s4">Знаков: 0</span><span class="s5">Строк: 0/40</span>
        <svg class="ico" viewBox="0 0 10 10"><path d="M2 2h7v5H6L4 9V7H2z" fill="#ccc"/></svg>
        <svg class="ico" viewBox="0 0 10 10"><path d="M8 3h1M6 6h3M4 9h5" stroke="#aaa" stroke-dasharray="1 1"/></svg>
      </footer>
      <settings-dialog></settings-dialog>
    `;
  }
}
